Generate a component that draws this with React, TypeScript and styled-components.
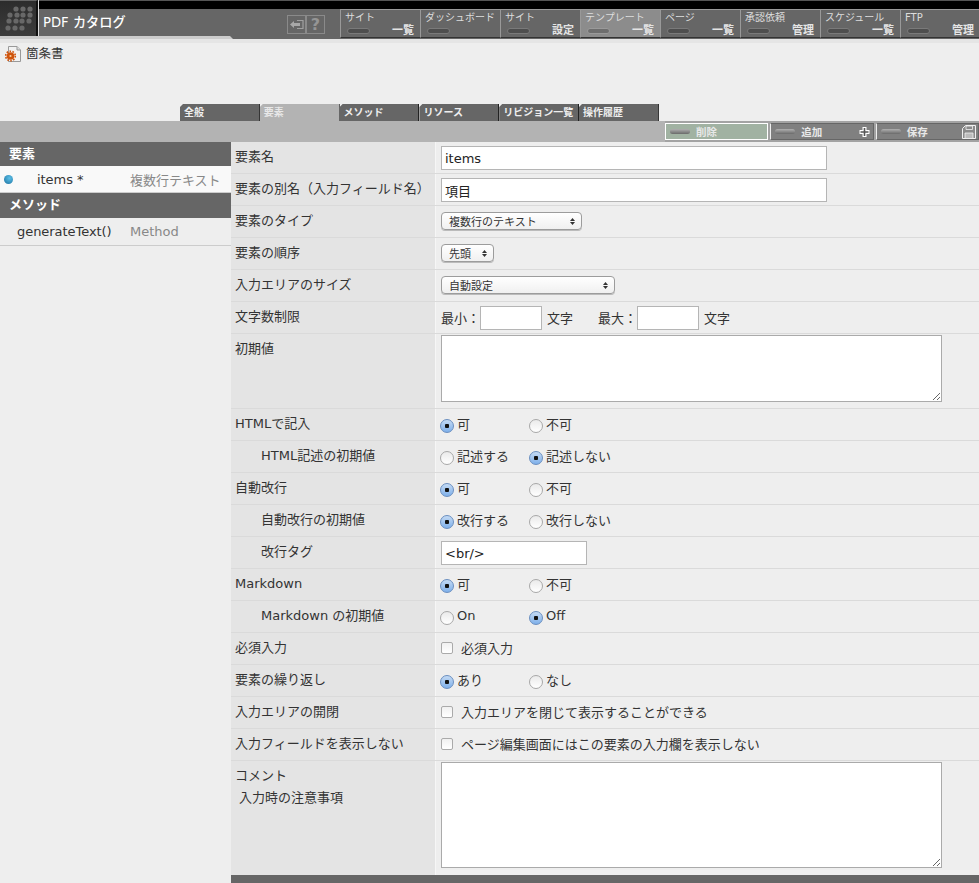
import React from "react";
import styled, { createGlobalStyle } from "styled-components";

const FONT = `"DejaVu Sans", "Noto Sans CJK JP", sans-serif`;

const GlobalStyle = createGlobalStyle`
  html, body {
    margin: 0;
    padding: 0;
    background: #eee;
    overflow: hidden;
  }
  body {
    font-family: ${FONT};
    font-size: 13px;
    color: #333;
  }
  * {
    box-sizing: border-box;
  }
`;

const Page = styled.div`
  width: 979px;
  height: 883px;
  display: flex;
  flex-direction: column;
`;

const Header = styled.header`
  height: 43px;
  flex: none;
  position: relative;
  background: #e5e5e5;
`;
const HeaderTop = styled.div`
  height: 39px;
  display: flex;
`;
const Logo = styled.div`
  width: 38px;
  height: 39px;
  background: linear-gradient(#2c2c2c, #3e3e3e);
  border-top: 1px solid #666;
  border-right: 2px solid #111;
  flex: none;
`;
const HeaderMain = styled.div`
  flex: 1;
  display: flex;
  flex-direction: column;
  border-left: 1px solid #ddd;
`;
const BlackStrip = styled.div`
  height: 9px;
  background: #000;
  border-top: 1px solid #555;
`;
const TitleBar = styled.div`
  height: 30px;
  background: #666;
  display: flex;
  align-items: flex-start;
`;
const Title = styled.div`
  width: 248px;
  padding: 5px 0 0 4px;
  color: #fff;
  font-size: 13.2px;
  font-weight: 500;
  line-height: 18px;
`;
const Notch = styled.div`
  position: absolute;
  left: 0;
  top: 36px;
  width: 233px;
  height: 3px;
  background: #ccc;
  clip-path: polygon(0 0, 230px 0, 100% 100%, 0 100%);
`;
const IconButton = styled.div`
  width: 19px;
  height: 19px;
  margin-top: 6px;
  border: 1px solid #8a8a8a;
  display: flex;
  align-items: center;
  justify-content: center;
  color: #959595;
  font-size: 16px;
  font-weight: bold;
  line-height: 1;
`;
const NavList = styled.nav`
  display: flex;
  margin-left: 15px;
`;
const NavItem = styled.div<{ $active?: boolean }>`
  width: 80px;
  height: 29px;
  background: ${(p) => (p.$active ? "#8c8c8c" : "#666")};
  border-top: 1px solid #999;
  border-left: 1px solid #999;
  border-bottom: 1px solid #333;
  display: flex;
  flex-direction: column;
  justify-content: space-between;
  color: #ddd;
`;
const NavTop = styled.div`
  font-size: 10px;
  line-height: 13px;
  padding: 1px 0 0 4px;
  white-space: nowrap;
  overflow: hidden;
`;
const NavBottom = styled.div`
  display: flex;
  justify-content: space-between;
  align-items: center;
  padding: 0 6px 0 6px;
  height: 13px;
`;
const NavAction = styled.span`
  font-size: 11px;
  font-weight: bold;
  color: #e4e4e4;
  line-height: 13px;
`;
const Pill = styled.span<{ $active?: boolean }>`
  width: 23px;
  height: 6px;
  border-radius: 3px;
  background: ${(p) => (p.$active ? "#6e6e6e" : "#4e4e4e")};
  border: 1px solid ${(p) => (p.$active ? "#9a9a9a" : "#7a7a7a")};
  display: block;
`;

const PageTitle = styled.div`
  height: 61px;
  padding: 3px 0 0 5px;
  display: flex;
  align-items: flex-start;
  gap: 4px;
  flex: none;
  line-height: 16px;
  font-size: 12.5px;
`;

const Tabs = styled.div`
  display: flex;
  height: 17px;
  padding-left: 180px;
  flex: none;
`;
const Tab = styled.div<{ $active?: boolean }>`
  width: 79.8px;
  height: 17px;
  background: ${(p) => (p.$active ? "#b3b3b3" : "#666")};
  color: ${(p) => (p.$active ? "#e8e8e8" : "#eee")};
  border-right: 1px solid #222;
  font-size: 10px;
  font-weight: bold;
  line-height: 17px;
  padding-left: 4px;
  white-space: nowrap;
  clip-path: polygon(3px 0, 100% 0, 100% 100%, 0 100%, 0 3px);
`;

const Toolbar = styled.div`
  height: 21px;
  background: #b3b3b3;
  display: flex;
  justify-content: flex-end;
  flex: none;
`;
const ToolGroup = styled.div`
  display: flex;
  width: 314px;
  padding-top: 2px;
  gap: 2px;
  background: #a3a3a3;
`;
const ToolButton = styled.div<{ $tone: "danger" | "normal" }>`
  flex: 1;
  height: 17px;
  background: ${(p) => (p.$tone === "danger" ? "#a1b2a2" : "#808080")};
  border: 1px solid ${(p) => (p.$tone === "danger" ? "#fff" : "#666")};
  border-left-color: ${(p) => (p.$tone === "danger" ? "#fff" : "#eee")};
  display: flex;
  align-items: center;
  padding: 0 2px 0 4px;
  color: #e8e8e8;
  font-size: 10.5px;
  font-weight: bold;
`;
const ToolLabel = styled.span`
  margin-left: 6px;
  flex: 1;
`;
const ToolPill = styled.span`
  width: 20px;
  height: 5px;
  border-radius: 3px;
  background: linear-gradient(#b0b0b0, #6a6a6a);
`;

const Body = styled.div`
  flex: 1;
  display: flex;
  min-height: 0;
`;
const Sidebar = styled.aside`
  width: 231px;
  flex: none;
`;
const SideHead = styled.div<{ $height: number }>`
  background: #666;
  color: #fff;
  font-weight: bold;
  font-size: 13px;
  padding-left: 9px;
  height: ${(p) => p.$height}px;
  line-height: 23px;
`;
const SideRow = styled.div<{ $selected?: boolean }>`
  height: ${(p) => (p.$selected ? 27 : 28)}px;
  display: flex;
  align-items: center;
  background: ${(p) => (p.$selected ? "#f9f9f9" : "#eee")};
  border-bottom: 1px solid #ccc;
  font-size: 13px;
  position: relative;
`;
const Dot = styled.span`
  width: 9px;
  height: 9px;
  border-radius: 50%;
  position: absolute;
  left: 4px;
  top: 9px;
  background: radial-gradient(circle at 60% 35%, #5cc0e8, #1a6f9e);
`;
const SideName = styled.span<{ $indent: number }>`
  width: 130px;
  padding-left: ${(p) => p.$indent}px;
  letter-spacing: -0.05px;
`;
const SideType = styled.span`
  color: #888;
  white-space: nowrap;
`;

const Form = styled.main`
  flex: 1;
  display: flex;
  flex-direction: column;
`;
const Row = styled.div<{ $height?: number; $last?: boolean }>`
  height: ${(p) => p.$height ?? 32}px;
  display: flex;
  border-bottom: ${(p) => (p.$last ? "none" : "1px solid #dadada")};
  flex: none;
`;
const Label = styled.div<{ $sub?: boolean }>`
  width: 204px;
  flex: none;
  background: #e4e4e4;
  padding: 7px 0 0 ${(p) => (p.$sub ? 30 : 4)}px;
  line-height: 16px;
  font-size: 13px;
  white-space: nowrap;
`;
const SubNote = styled.div`
  margin: 6px 0 0 4px;
`;
const Value = styled.div<{ $top?: boolean }>`
  flex: 1;
  border-left: 1px solid #f6f6f6;
  padding: ${(p) => (p.$top ? "1px" : "0")} 0 0 5px;
  display: flex;
  align-items: ${(p) => (p.$top ? "flex-start" : "center")};
  font-size: 13px;
`;
const TextInput = styled.input<{ $width: number }>`
  width: ${(p) => p.$width}px;
  height: 24px;
  margin-top: 1px;
  border: 1px solid #b5b5b5;
  background: #fff;
  font-family: ${FONT};
  font-size: 13px;
  color: #222;
  padding: 0 3px;
  outline: none;
`;
const TextArea = styled.textarea<{ $height: number }>`
  width: 501px;
  height: ${(p) => p.$height}px;
  border: 1px solid #aaa;
  background: #fff;
  margin: 0;
  display: block;
  outline: none;
`;
const Select = styled.div<{ $width: number }>`
  width: ${(p) => p.$width}px;
  height: 18px;
  margin-top: -1px;
  border: 1px solid #9c9c9c;
  border-radius: 4px;
  background: linear-gradient(#fff, #f0f0f0);
  box-shadow: 0 1px 0 #bbb;
  display: flex;
  align-items: center;
  justify-content: space-between;
  padding: 0 6px 0 7px;
  font-size: 11px;
`;
const Arrows = styled.span`
  display: flex;
  flex-direction: column;
  gap: 1px;
`;
const RadioOption = styled.label<{ $width: number }>`
  width: ${(p) => p.$width}px;
  margin-left: -1px;
  margin-right: 1px;
  display: flex;
  align-items: center;
  gap: 3px;
`;
const RadioMark = styled.span<{ $checked?: boolean }>`
  width: 14px;
  height: 14px;
  margin-top: 2px;
  border-radius: 50%;
  border: 1px solid ${(p) => (p.$checked ? "#6a8fc0" : "#a8a8a8")};
  background: ${(p) =>
    p.$checked
      ? "radial-gradient(circle, #111 0 2px, transparent 2.5px), linear-gradient(#c4daf4, #7fb0ea)"
      : "linear-gradient(#eaeaea, #fff)"};
  flex: none;
`;
const OptionText = styled.span`
  margin-top: -2px;
  white-space: nowrap;
`;
const CheckMark = styled.span`
  width: 12px;
  height: 12px;
  margin: -1px 8px 0 0;
  border: 1px solid #aaa;
  border-radius: 2px;
  background: linear-gradient(#f0f0f0, #fff);
  flex: none;
`;
const CheckText = styled.span`
  margin-top: -3px;
  white-space: nowrap;
`;
const Plain = styled.span<{ $left?: number }>`
  margin-left: ${(p) => p.$left ?? 0}px;
  white-space: nowrap;
`;
const Footer = styled.div`
  height: 8px;
  background: #666;
`;

const DOTS = [
  [16, 8], [23, 8], [30, 8],
  [10, 14], [17, 14], [23, 14], [30, 14],
  [9, 20], [16, 20], [22, 20], [29, 20],
  [8, 27], [15, 27], [22, 27],
];

const NAV = [
  { top: "サイト", action: "一覧" },
  { top: "ダッシュボード", action: "" },
  { top: "サイト", action: "設定" },
  { top: "テンプレート", action: "一覧", active: true },
  { top: "ページ", action: "一覧" },
  { top: "承認依頼", action: "管理" },
  { top: "スケジュール", action: "一覧" },
  { top: "FTP", action: "管理" },
];

const TABS = ["全般", "要素", "メソッド", "リソース", "リビジョン一覧", "操作履歴"];

const SelectBox: React.FC<{ width: number; text: string }> = ({ width, text }) => (
  <Select $width={width}>
    <span>{text}</span>
    <Arrows>
      <svg width="5" height="3" viewBox="0 0 5 3" style={{ display: "block" }}>
        <path d="M2.5 0L5 3H0z" fill="#333" />
      </svg>
      <svg width="5" height="3" viewBox="0 0 5 3" style={{ display: "block" }}>
        <path d="M0 0H5L2.5 3z" fill="#333" />
      </svg>
    </Arrows>
  </Select>
);

const Radio: React.FC<{ text: string; checked?: boolean }> = ({ text, checked }) => (
  <RadioOption $width={89}>
    <RadioMark $checked={checked} />
    <OptionText>{text}</OptionText>
  </RadioOption>
);

const Check: React.FC<{ text: string }> = ({ text }) => (
  <>
    <CheckMark />
    <CheckText>{text}</CheckText>
  </>
);

export default function App() {
  return (
    <Page>
      <GlobalStyle />
      <Header>
        <HeaderTop>
          <Logo>
            <svg width="36" height="35" viewBox="0 0 36 35" style={{ display: "block" }}>
              {DOTS.map(([x, y]) => (
                <circle key={`${x}-${y}`} cx={x} cy={y} r="2.6" fill="#686868" />
              ))}
            </svg>
          </Logo>
          <HeaderMain>
            <BlackStrip />
            <TitleBar>
              <Title>PDF カタログ</Title>
              <IconButton>
                <svg width="15" height="11" viewBox="0 0 15 11">
                  <path d="M1 5.5L5 2v2h6v3H5v2z" fill="#a8a8a8" />
                  <path d="M8 1.5h6v8H8" fill="none" stroke="#a0a0a0" strokeWidth="1.2" />
                </svg>
              </IconButton>
              <IconButton>?</IconButton>
              <NavList>
                {NAV.map((n) => (
                  <NavItem key={n.top + n.action} $active={n.active}>
                    <NavTop>{n.top}</NavTop>
                    <NavBottom>
                      <Pill $active={n.active} />
                      <NavAction>{n.action}</NavAction>
                    </NavBottom>
                  </NavItem>
                ))}
              </NavList>
            </TitleBar>
          </HeaderMain>
        </HeaderTop>
        <Notch />
      </Header>

      <PageTitle>
        <svg width="17" height="17" viewBox="0 0 17 17">
          <path d="M3.5 0.5H12l3.5 3.5V15.5H3.5z" fill="#f2f2f2" stroke="#999" />
          <path d="M12 0.5V4h3.5" fill="#ddd" stroke="#999" />
          <circle cx="5.5" cy="10" r="3.8" fill="#d0540c" />
          <circle cx="5.5" cy="10" r="4.8" fill="none" stroke="#d0540c" strokeWidth="1.6" strokeDasharray="1.6 1.4" />
          <circle cx="5.5" cy="10" r="1.1" fill="#f6d0a0" />
        </svg>
        <span>箇条書</span>
      </PageTitle>

      <Tabs>
        {TABS.map((t, i) => (
          <Tab key={t} $active={i === 1}>{t}</Tab>
        ))}
      </Tabs>

      <Toolbar>
        <ToolGroup>
          <ToolButton $tone="danger">
            <ToolPill />
            <ToolLabel>削除</ToolLabel>
          </ToolButton>
          <ToolButton $tone="normal">
            <ToolPill />
            <ToolLabel>追加</ToolLabel>
            <svg width="13" height="12" viewBox="0 0 13 12">
              <path d="M6.5 1v10M1.5 6h10" fill="none" stroke="#fff" strokeWidth="4" />
              <path d="M6.5 2v8M2.5 6h8" fill="none" stroke="#555" strokeWidth="1.6" />
            </svg>
          </ToolButton>
          <ToolButton $tone="normal">
            <ToolPill />
            <ToolLabel>保存</ToolLabel>
            <svg width="14" height="14" viewBox="0 0 14 14">
              <path d="M0.5 3.5l3-3h10v13H0.5z" fill="#8a8a8a" stroke="#f0f0f0" />
              <path d="M4 1h6.5v3.5H4z" fill="#8a8a8a" stroke="#f0f0f0" strokeWidth="0.8" />
              <path d="M3 8h8v5.5H3z" fill="#bbb" stroke="#f0f0f0" strokeWidth="0.8" />
            </svg>
          </ToolButton>
        </ToolGroup>
      </Toolbar>

      <Body>
        <Sidebar>
          <SideHead $height={24}>要素</SideHead>
          <SideRow $selected>
            <Dot />
            <SideName $indent={37}>items *</SideName>
            <SideType>複数行テキスト</SideType>
          </SideRow>
          <SideHead $height={25}>メソッド</SideHead>
          <SideRow>
            <SideName $indent={17}>generateText()</SideName>
            <SideType>Method</SideType>
          </SideRow>
        </Sidebar>

        <Form>
          <Row>
            <Label>要素名</Label>
            <Value><TextInput $width={386} defaultValue="items" /></Value>
          </Row>
          <Row>
            <Label>要素の別名（入力フィールド名）</Label>
            <Value><TextInput $width={386} defaultValue="項目" /></Value>
          </Row>
          <Row>
            <Label>要素のタイプ</Label>
            <Value><SelectBox width={141} text="複数行のテキスト" /></Value>
          </Row>
          <Row>
            <Label>要素の順序</Label>
            <Value><SelectBox width={53} text="先頭" /></Value>
          </Row>
          <Row>
            <Label>入力エリアのサイズ</Label>
            <Value><SelectBox width={174} text="自動設定" /></Value>
          </Row>
          <Row>
            <Label>文字数制限</Label>
            <Value>
              <Plain>最小：</Plain>
              <TextInput $width={62} />
              <Plain $left={5}>文字</Plain>
              <Plain $left={25}>最大：</Plain>
              <TextInput $width={62} />
              <Plain $left={5}>文字</Plain>
            </Value>
          </Row>
          <Row $height={75}>
            <Label>初期値</Label>
            <Value $top><TextArea $height={67} /></Value>
          </Row>
          <Row>
            <Label>HTMLで記入</Label>
            <Value><Radio text="可" checked /><Radio text="不可" /></Value>
          </Row>
          <Row>
            <Label $sub>HTML記述の初期値</Label>
            <Value><Radio text="記述する" /><Radio text="記述しない" checked /></Value>
          </Row>
          <Row>
            <Label>自動改行</Label>
            <Value><Radio text="可" checked /><Radio text="不可" /></Value>
          </Row>
          <Row>
            <Label $sub>自動改行の初期値</Label>
            <Value><Radio text="改行する" checked /><Radio text="改行しない" /></Value>
          </Row>
          <Row>
            <Label $sub>改行タグ</Label>
            <Value><TextInput $width={146} defaultValue="<br/>" /></Value>
          </Row>
          <Row>
            <Label>Markdown</Label>
            <Value><Radio text="可" checked /><Radio text="不可" /></Value>
          </Row>
          <Row>
            <Label $sub>Markdown の初期値</Label>
            <Value><Radio text="On" /><Radio text="Off" checked /></Value>
          </Row>
          <Row>
            <Label>必須入力</Label>
            <Value><Check text="必須入力" /></Value>
          </Row>
          <Row>
            <Label>要素の繰り返し</Label>
            <Value><Radio text="あり" checked /><Radio text="なし" /></Value>
          </Row>
          <Row>
            <Label>入力エリアの開閉</Label>
            <Value><Check text="入力エリアを閉じて表示することができる" /></Value>
          </Row>
          <Row>
            <Label>入力フィールドを表示しない</Label>
            <Value><Check text="ページ編集画面にはこの要素の入力欄を表示しない" /></Value>
          </Row>
          <Row $height={114} $last>
            <Label>
              コメント
              <SubNote>入力時の注意事項</SubNote>
            </Label>
            <Value $top><TextArea $height={106} /></Value>
          </Row>
          <Footer />
        </Form>
      </Body>
    </Page>
  );
}
